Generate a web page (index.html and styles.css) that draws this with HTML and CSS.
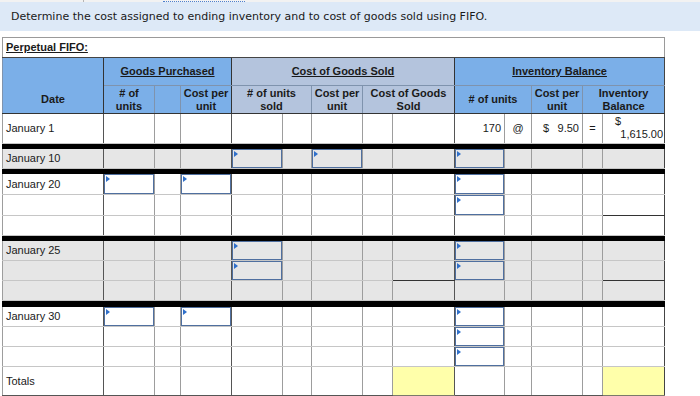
FILE: index.html
```html
<!DOCTYPE html>
<html>
<head>
<meta charset="utf-8">
<link rel="stylesheet" href="styles.css">
</head>
<body>
<div class="tabs"><span class="tab"></span><span class="tab-active"></span></div>
<div class="banner">Determine the cost assigned to ending inventory and to cost of goods sold using FIFO.</div>
<table class="sheet">
  <colgroup>
    <col class="w101"><col class="w51"><col class="w26"><col class="w51">
    <col class="w51"><col class="w29"><col class="w51"><col class="w30"><col class="w62">
    <col class="w50"><col class="w27"><col class="w51"><col class="w20"><col class="w62">
  </colgroup>
  <tr class="title-row"><td colspan="14" class="title">Perpetual FIFO:</td></tr>
  <tr class="h1">
    <th rowspan="2" class="blue date ge">Date</th>
    <th colspan="3" class="blue grp ge">Goods Purchased</th>
    <th colspan="5" class="slate grp ge">Cost of Goods Sold</th>
    <th colspan="5" class="blue grp last">Inventory Balance</th>
  </tr>
  <tr class="h2">
    <th class="blue">#&nbsp;of<br>units</th>
    <th class="blue"></th>
    <th class="blue ge">Cost per<br>unit</th>
    <th colspan="2" class="slate"># of units<br>sold</th>
    <th class="slate">Cost per<br>unit</th>
    <th colspan="2" class="slate ge">Cost of Goods<br>Sold</th>
    <th colspan="2" class="blue"># of units</th>
    <th class="blue">Cost per<br>unit</th>
    <th colspan="2" class="blue last">Inventory<br>Balance</th>
  </tr>
  <tr class="tall">
    <td class="ge lbl">January 1</td><td></td><td></td><td class="ge"></td>
    <td></td><td></td><td></td><td></td><td class="ge"></td>
    <td class="num">170</td><td class="ctr">@</td><td class="money"><span>$</span><span>9.50</span></td><td class="ctr">=</td>
    <td class="last bal"><div class="cur">$</div><div class="amt">1,615.00</div></td>
  </tr>
  <tr class="sep"><td colspan="14"></td></tr>
  <tr class="r grey">
    <td class="ge lbl">January 10</td><td></td><td></td><td class="ge"></td>
    <td class="ip"><div class="inp"></div></td><td></td><td class="ip"><div class="inp"></div></td><td></td><td class="ge"></td>
    <td class="ip"><div class="inp"></div></td><td></td><td></td><td></td><td class="last"></td>
  </tr>
  <tr class="sep"><td colspan="14"></td></tr>
  <tr class="r21">
    <td class="ge lbl">January 20</td><td class="ip"><div class="inp"></div></td><td></td><td class="ge ip"><div class="inp"></div></td>
    <td></td><td></td><td></td><td></td><td class="ge"></td>
    <td class="ip"><div class="inp"></div></td><td></td><td></td><td></td><td class="last"></td>
  </tr>
  <tr class="r21">
    <td class="ge"></td><td></td><td></td><td class="ge"></td>
    <td></td><td></td><td></td><td></td><td class="ge"></td>
    <td class="ip"><div class="inp"></div></td><td></td><td></td><td></td><td class="last dk-b"></td>
  </tr>
  <tr class="r">
    <td class="ge"></td><td></td><td></td><td class="ge"></td>
    <td></td><td></td><td></td><td></td><td class="ge"></td>
    <td></td><td></td><td></td><td></td><td class="last"></td>
  </tr>
  <tr class="sep"><td colspan="14"></td></tr>
  <tr class="r grey">
    <td class="ge lbl">January 25</td><td></td><td></td><td class="ge"></td>
    <td class="ip"><div class="inp"></div></td><td></td><td></td><td></td><td class="ge"></td>
    <td class="ip"><div class="inp"></div></td><td></td><td></td><td></td><td class="last"></td>
  </tr>
  <tr class="r grey">
    <td class="ge"></td><td></td><td></td><td class="ge"></td>
    <td class="ip"><div class="inp"></div></td><td></td><td></td><td></td><td class="ge dk-b"></td>
    <td class="ip"><div class="inp"></div></td><td></td><td></td><td></td><td class="last dk-b"></td>
  </tr>
  <tr class="r grey">
    <td class="ge"></td><td></td><td></td><td class="ge"></td>
    <td></td><td></td><td></td><td></td><td class="ge"></td>
    <td></td><td></td><td></td><td></td><td class="last"></td>
  </tr>
  <tr class="sep sep6"><td colspan="14"></td></tr>
  <tr class="r">
    <td class="ge lbl">January 30</td><td class="ip"><div class="inp"></div></td><td></td><td class="ge ip"><div class="inp"></div></td>
    <td></td><td></td><td></td><td></td><td class="ge"></td>
    <td class="ip"><div class="inp"></div></td><td></td><td></td><td></td><td class="last"></td>
  </tr>
  <tr class="r">
    <td class="ge"></td><td></td><td></td><td class="ge"></td>
    <td></td><td></td><td></td><td></td><td class="ge"></td>
    <td class="ip"><div class="inp"></div></td><td></td><td></td><td></td><td class="last"></td>
  </tr>
  <tr class="r">
    <td class="ge"></td><td></td><td></td><td class="ge"></td>
    <td></td><td></td><td></td><td></td><td class="ge"></td>
    <td class="ip"><div class="inp"></div></td><td></td><td></td><td></td><td class="last"></td>
  </tr>
  <tr class="tall totals">
    <td class="ge lbl">Totals</td><td></td><td></td><td class="ge"></td>
    <td></td><td></td><td></td><td></td><td class="ge yellow"></td>
    <td></td><td></td><td></td><td></td><td class="last yellow"></td>
  </tr>
</table>
</body>
</html>
```
FILE: styles.css
```css
body {
  margin: 0;
  background: #fff;
  color: #1a1a1a;
  font-family: "Liberation Sans", Arial, sans-serif;
}

.tabs {
  display: flex;
  height: 2px;
  background: #f2f2f2;
}

.tab {
  width: 83px;
  border-right: 1px solid #b5b5b5;
}

.tab-active {
  margin-left: 79px;
  width: 82px;
  height: 1px;
  border-bottom: 1px dotted #4d80cf;
}

.banner {
  height: 29px;
  padding-left: 11px;
  background: #dde9f7;
  font-family: "DejaVu Sans", Verdana, sans-serif;
  font-size: 11px;
  line-height: 29px;
  color: #1a1a1a;
}

.sheet {
  margin: 6px 0 0 2px;
  width: 663px;
  table-layout: fixed;
  border-collapse: collapse;
  font-size: 11px;
  line-height: 13px;
}

.w101 { width: 101px; }
.w51 { width: 51px; }
.w50 { width: 50px; }
.w26 { width: 26px; }
.w27 { width: 27px; }
.w29 { width: 29px; }
.w30 { width: 30px; }
.w62 { width: 62px; }
.w20 { width: 20px; }

.sheet td {
  padding: 0 3px;
  border-top: 1px solid #c6c6c6;
  border-bottom: 1px solid #c6c6c6;
  border-left: 1px solid #9d9d9d;
  border-right: 1px solid #9d9d9d;
  vertical-align: middle;
}

.sheet td.ge {
  border-right-color: #555;
}

.sheet td.last {
  border-right-color: #444;
}

.sheet td.dk-b {
  border-bottom-color: #333;
}

.sheet .title-row td.title {
  height: 19px;
  padding: 0 3px;
  border: 1px solid #9a9a9a;
  border-bottom: 1px solid #444;
  font-weight: bold;
  text-decoration: underline;
  background: #fff;
}

.sheet th {
  padding: 0 2px;
  font-weight: bold;
  text-align: center;
  vertical-align: middle;
  border: 1px solid #7f93ad;
  color: #1a1a1a;
}

.sheet th.ge {
  border-right: 1px solid #333;
}

.sheet th.last {
  border-right: 1px solid #444;
}

.h1 th {
  height: 27px;
  border-top: 1px solid #444;
}

.h2 th {
  height: 27px;
  border-bottom: 1px solid #333;
}

.sheet th.date {
  vertical-align: bottom;
  padding-bottom: 7px;
  border-bottom: 1px solid #333;
}

.grp {
  text-decoration: underline;
}

.blue {
  background: #7bafe8;
}

.slate {
  background: #b4c4dd;
}

.tall td {
  height: 28px;
}

.r td {
  height: 19px;
}

.r21 td {
  height: 20px;
}

.grey td {
  background: #e6e6e6;
}

.sep td {
  height: 4px;
  padding: 0;
  background: #000;
  border: 1px solid #000;
}

.sep6 td {
  height: 5px;
}

.lbl {
  text-align: left;
}

.sheet td.lbl {
  padding-left: 3px;
}

.num {
  text-align: right;
}

.ctr {
  text-align: center;
}

.sheet td.money {
  padding: 0 3px 0 11px;
}

.money {
  white-space: nowrap;
}

.money span:last-child {
  float: right;
}

.sheet td.bal {
  vertical-align: top;
  padding: 1px 1px 0 12px;
}

.amt {
  text-align: right;
}

.sheet td.ip {
  padding: 0;
}

.inp {
  position: relative;
  box-sizing: border-box;
  height: 19px;
  border: 1px solid #4f6f9f;
}

.r21 .inp {
  height: 20px;
}

.inp::before {
  content: "";
  position: absolute;
  left: 1px;
  top: 1px;
  width: 0;
  height: 0;
  border-left: 4px solid #2f6fca;
  border-top: 3px solid transparent;
  border-bottom: 3px solid transparent;
}

.sheet td.yellow {
  background: #ffffaa;
  border-bottom-color: #7a7a6a;
}

.totals td {
  border-bottom-color: #555;
}
```
